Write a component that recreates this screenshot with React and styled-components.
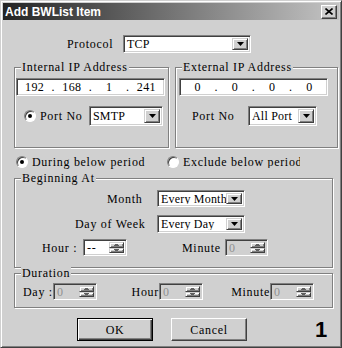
import React from "react";
import styled, { createGlobalStyle } from "styled-components";

const FACE = "#d0d0d0";

const Global = createGlobalStyle`
  html, body { margin: 0; padding: 0; background: ${FACE}; }
  body { width: 342px; height: 348px; overflow: hidden; }
`;

const Window = styled.div`
  box-sizing: border-box;
  width: 342px;
  height: 348px;
  background: ${FACE};
  border: 1px solid;
  border-color: ${FACE} #404040 #404040 ${FACE};
  box-shadow: inset 1px 1px 0 #fff, inset -1px -1px 0 #808080;
  padding: 2px;
  font-family: "Liberation Serif", "Times New Roman", serif;
  font-size: 12px;
  letter-spacing: 0.7px;
  line-height: 12px;
  color: #000;
`;

const TitleBar = styled.div`
  height: 17px;
  display: flex;
  align-items: center;
  justify-content: space-between;
  padding: 0 2px;
  background: linear-gradient(to right, #242424, #c4c4c4);
`;

const Title = styled.span`
  font-family: "Liberation Sans", Arial, sans-serif;
  font-weight: bold;
  font-size: 12px;
  letter-spacing: 0;
  color: #fff;
`;

const CloseBtn = styled.div`
  box-sizing: border-box;
  width: 16px;
  height: 14px;
  background: ${FACE};
  border: 1px solid;
  border-color: #fff #404040 #404040 #fff;
  box-shadow: inset -1px -1px 0 #808080;
  display: flex;
  align-items: center;
  justify-content: center;
`;

const Body = styled.div`
  padding: 0 0 0 11px;
`;

const Row = styled.div`
  display: flex;
  align-items: center;
  margin-top: ${(p) => p.$top || 0}px;
  padding-left: ${(p) => p.$indent || 0}px;
  height: ${(p) => p.$h || 18}px;
`;

const Label = styled.span`
  display: inline-block;
  white-space: nowrap;
  width: ${(p) => (p.$w ? `${p.$w}px` : "auto")};
  margin-left: ${(p) => p.$left || 0}px;
  text-align: ${(p) => (p.$right ? "right" : "left")};
  overflow: ${(p) => (p.$clip ? "hidden" : "visible")};
`;

const Sunken = styled.div`
  box-sizing: border-box;
  border: 1px solid;
  border-color: #808080 #fff #fff #808080;
  box-shadow: inset 1px 1px 0 #404040, inset -1px -1px 0 ${FACE};
`;

const SelectBox = styled(Sunken)`
  width: ${(p) => p.$w}px;
  height: ${(p) => p.$h || 18}px;
  margin-left: ${(p) => p.$left || 0}px;
  background: #fff;
  display: flex;
  align-items: stretch;
  padding: 2px;
`;

const SelectText = styled.span`
  flex: 1;
  overflow: hidden;
  white-space: nowrap;
  padding-left: 1px;
  letter-spacing: 0.2px;
  display: flex;
  align-items: center;
`;

const ArrowBtn = styled.div`
  box-sizing: border-box;
  width: ${(p) => p.$w || 16}px;
  background: ${FACE};
  border: 1px solid;
  border-color: ${FACE} #404040 #404040 ${FACE};
  box-shadow: inset 1px 1px 0 #fff, inset -1px -1px 0 #808080;
  display: flex;
  align-items: center;
  justify-content: center;
`;

const Group = styled.div`
  box-sizing: border-box;
  width: ${(p) => p.$w}px;
  height: ${(p) => p.$h}px;
  border: 1px solid #808080;
  box-shadow: inset 1px 1px 0 #fff, 1px 1px 0 #fff;
  margin-top: ${(p) => p.$top || 0}px;
`;

const GroupTitle = styled.div`
  width: fit-content;
  margin: -7px 0 0 6px;
  padding: 0 1px;
  background: ${FACE};
  line-height: 12px;
  height: 12px;
`;

const GroupRow = styled.div`
  display: flex;
  gap: 6px;
  margin-top: ${(p) => p.$top || 0}px;
`;

const IpField = styled(Sunken)`
  width: 149px;
  height: 18px;
  margin: 5px 0 0 ${(p) => p.$left}px;
  background: #fff;
  padding: 2px;
  display: grid;
  grid-template-columns: 1fr 6px 1fr 6px 1fr 6px 1fr;
  align-items: center;
  text-align: center;
  letter-spacing: 0.4px;
`;

const Radio = styled.span`
  box-sizing: border-box;
  display: inline-block;
  width: 12px;
  height: 12px;
  border-radius: 50%;
  background: #fff;
  border: 1px solid;
  border-color: #808080 #fff #fff #808080;
  box-shadow: inset 1px 1px 0 #404040;
  position: relative;
  margin-left: ${(p) => p.$left || 0}px;
  margin-right: 4px;
  flex: none;
  &::after {
    content: "";
    display: ${(p) => (p.$on ? "block" : "none")};
    position: absolute;
    left: 3px;
    top: 3px;
    width: 4px;
    height: 4px;
    border-radius: 50%;
    background: #000;
  }
`;

const SpinBox = styled(Sunken)`
  width: ${(p) => p.$w || 44}px;
  height: 17px;
  margin-left: ${(p) => p.$left || 0}px;
  background: ${(p) => (p.$off ? FACE : "#fff")};
  color: ${(p) => (p.$off ? "#909090" : "#000")};
  display: flex;
  padding: 2px;
  flex: none;
`;

const SpinText = styled.span`
  flex: 1;
  display: flex;
  align-items: center;
  padding-left: 1px;
`;

const SpinBtns = styled.div`
  width: 15px;
  display: flex;
  flex-direction: column;
`;

const SpinBtn = styled(ArrowBtn)`
  width: 15px;
  flex: 1;
`;

const ButtonRow = styled.div`
  display: flex;
  align-items: center;
  margin-top: 10px;
  padding-left: 63px;
`;

const Button = styled.div`
  box-sizing: border-box;
  width: 76px;
  height: 23px;
  margin-left: ${(p) => p.$left || 0}px;
  background: ${FACE};
  border: 1px solid;
  border-color: ${(p) => (p.$default ? "#000" : `#fff #404040 #404040 #fff`)};
  box-shadow: ${(p) =>
    p.$default
      ? `inset 1px 1px 0 #fff, inset -1px -1px 0 #404040, inset -2px -2px 0 #808080`
      : `inset -1px -1px 0 #808080`};
  display: flex;
  align-items: center;
  justify-content: center;
`;

const Badge = styled.span`
  margin-left: 68px;
  font-family: "Liberation Sans", Arial, sans-serif;
  font-weight: bold;
  font-size: 22px;
  letter-spacing: 0;
  line-height: 22px;
`;

const Down = ({ w = 7 }) => (
  <svg width={w} height="4" viewBox="0 0 7 4">
    <path d="M0 0h7L3.5 4z" fill="#000" />
  </svg>
);

const Select = ({ w, h, left, children, btn }) => (
  <SelectBox $w={w} $h={h} $left={left}>
    <SelectText>{children}</SelectText>
    <ArrowBtn $w={btn}>
      <Down />
    </ArrowBtn>
  </SelectBox>
);

const Spin = ({ w, left, off, children }) => (
  <SpinBox $w={w} $left={left} $off={off}>
    <SpinText>{children}</SpinText>
    <SpinBtns>
      <SpinBtn>
        <svg width="5" height="2" viewBox="0 0 5 2">
          <path d="M1 0h3v1h1v1H0V1h1z" fill="#606060" />
        </svg>
      </SpinBtn>
      <SpinBtn>
        <svg width="5" height="2" viewBox="0 0 5 2">
          <path d="M0 0h5v1H4v1H1V1H0z" fill="#606060" />
        </svg>
      </SpinBtn>
    </SpinBtns>
  </SpinBox>
);

const Ip = ({ left, parts }) => (
  <IpField $left={left}>
    {parts.map((p, i) => (
      <React.Fragment key={i}>
        {i > 0 && <span>.</span>}
        <span>{p}</span>
      </React.Fragment>
    ))}
  </IpField>
);

export default function App() {
  return (
    <>
      <Global />
      <Window>
        <TitleBar>
          <Title>Add BWList Item</Title>
          <CloseBtn>
            <svg width="8" height="7" viewBox="0 0 8 7">
              <path d="M0.5 0.5l7 6M7.5 0.5l-7 6" stroke="#000" strokeWidth="1.6" />
            </svg>
          </CloseBtn>
        </TitleBar>
        <Body>
          <Row $top={15} $indent={53}>
            <Label $w={56}>Protocol</Label>
            <Select w={128}>TCP</Select>
          </Row>

          <GroupRow $top={14}>
            <Group $w={155} $h={81}>
              <GroupTitle>Internal IP Address</GroupTitle>
              <Ip left={1} parts={["192", "168", "1", "241"]} />
              <Row $top={10} $h={20}>
                <Radio $left={9} $on />
                <Label $w={49}>Port No</Label>
                <Select w={74} h={20}>SMTP</Select>
              </Row>
            </Group>
            <Group $w={163} $h={81}>
              <GroupTitle>External IP Address</GroupTitle>
              <Ip left={3} parts={["0", "0", "0", "0"]} />
              <Row $top={10} $h={20}>
                <Label $w={56} $left={16}>Port No</Label>
                <Select w={69} h={20}>All Port</Select>
              </Row>
            </Group>
          </GroupRow>

          <Row $top={7} $h={13}>
            <Radio $left={2} $on />
            <Label $w={135}>During below period</Label>
            <Radio />
            <Label $w={117} $clip>Exclude below period</Label>
          </Row>

          <Group $w={319} $h={90} $top={10}>
            <GroupTitle>Beginning At</GroupTitle>
            <Row $top={6} $h={17} $indent={92}>
              <Label $w={50}>Month</Label>
              <Select w={88} h={17}>Every Month</Select>
            </Row>
            <Row $top={8} $h={18} $indent={60}>
              <Label $w={82}>Day of Week</Label>
              <Select w={88} h={18}>Every Day</Select>
            </Row>
            <Row $top={6} $h={17} $indent={27}>
              <Label $w={41}>Hour :</Label>
              <Spin>--</Spin>
              <Label $w={43} $left={55}>Minute</Label>
              <Spin w={43} off>0</Spin>
            </Row>
          </Group>

          <Group $w={319} $h={35} $top={5}>
            <GroupTitle>Duration</GroupTitle>
            <Row $top={4} $h={17} $indent={8}>
              <Label $w={30}>Day :</Label>
              <Spin off>0</Spin>
              <Label $w={62} $right>Hour</Label>
              <Spin off>0</Spin>
              <Label $w={67} $right>Minute</Label>
              <Spin off>0</Spin>
            </Row>
          </Group>

          <ButtonRow>
            <Button $default>OK</Button>
            <Button $left={18}>Cancel</Button>
            <Badge>1</Badge>
          </ButtonRow>
        </Body>
      </Window>
    </>
  );
}
